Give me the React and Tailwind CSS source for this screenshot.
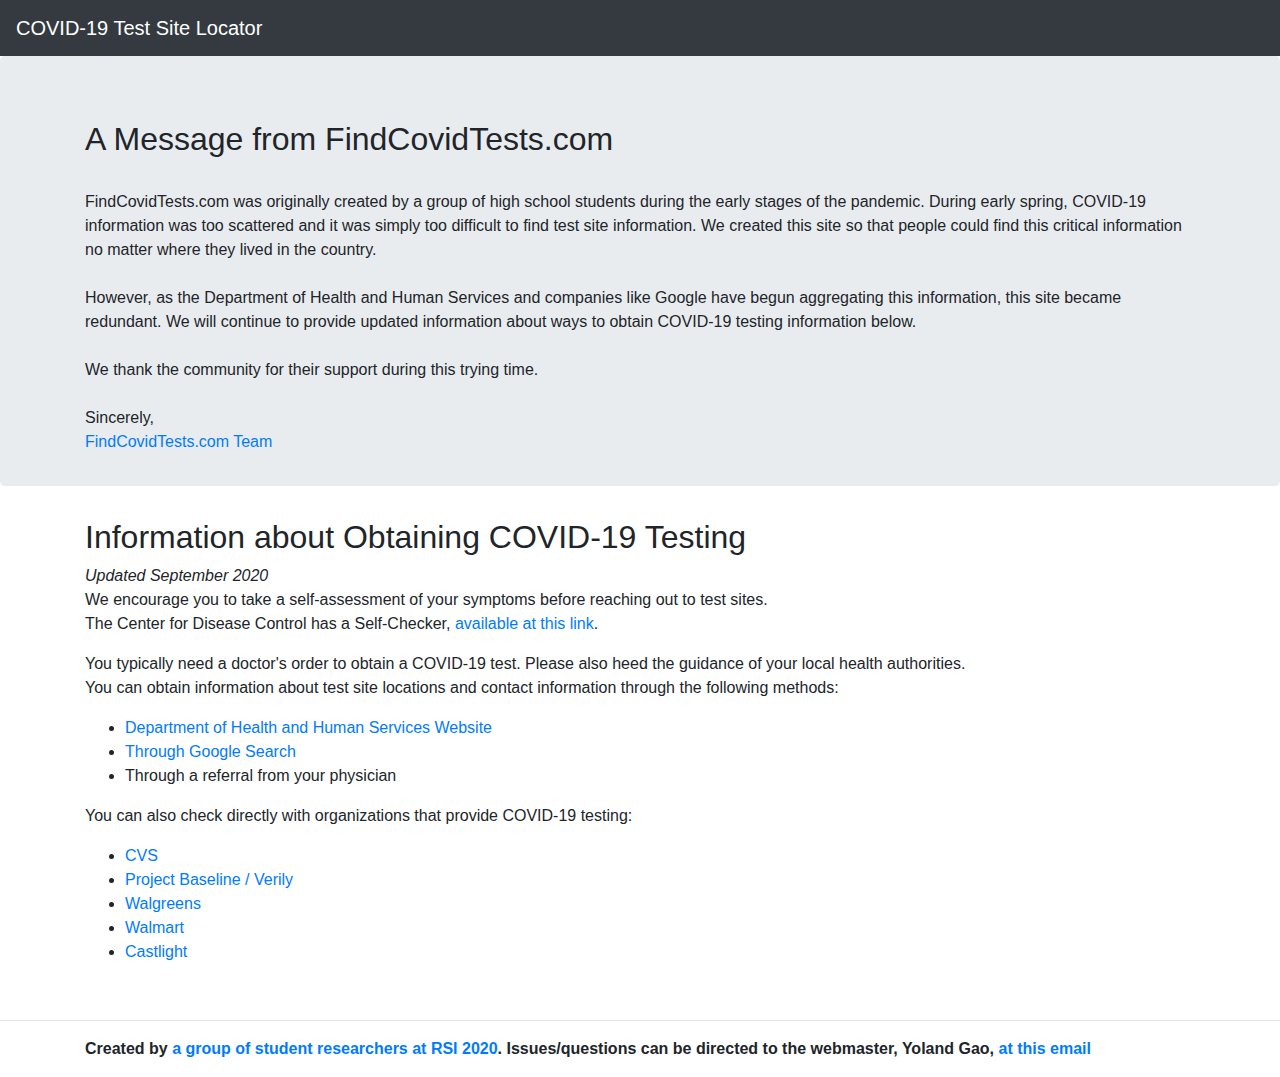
import React from 'react';

const linkClass = 'text-[#007bff] hover:underline';

const NavBar = () => (
  <nav className="h-14 bg-[#343a40] flex items-center px-4">
    <a href="#" className="text-white text-xl leading-[30px]">COVID-19 Test Site Locator</a>
  </nav>
);

const Message = () => (
  <div className="bg-[#e9ecef] rounded-[0.3rem] pt-16 pb-[32px] mb-8">
    <div className="max-w-[1140px] mx-auto px-[15px]">
      <h2 className="text-[32px] leading-[1.2] font-medium mb-[32px]">A Message from FindCovidTests.com</h2>
      <p className="leading-6">
        FindCovidTests.com was originally created by a group of high school students during the early stages of the pandemic. During early spring, COVID-19 information was too scattered and it was simply too difficult to find test site information. We created this site so that people could find this critical information no matter where they lived in the country.
        <br />
        <br />
        However, as the Department of Health and Human Services and companies like Google have begun aggregating this information, this site became redundant. We will continue to provide updated information about ways to obtain COVID-19 testing information below.
        <br />
        <br />
        We thank the community for their support during this trying time.
        <br />
        <br />
        Sincerely,
        <br />
        <a href="#" className={linkClass}>FindCovidTests.com Team</a>
      </p>
    </div>
  </div>
);

const methods = [
  { label: 'Department of Health and Human Services Website', link: true },
  { label: 'Through Google Search', link: true },
  { label: 'Through a referral from your physician', link: false },
];

const orgs = ['CVS', 'Project Baseline / Verily', 'Walgreens', 'Walmart', 'Castlight'];

const Info = () => (
  <div className="max-w-[1140px] mx-auto px-[15px]">
    <h2 className="text-[32px] leading-[1.2] font-medium mb-[7px]">Information about Obtaining COVID-19 Testing</h2>
    <p className="leading-6 mb-4">
      <i>Updated September 2020</i>
      <br />
      We encourage you to take a self-assessment of your symptoms before reaching out to test sites.
      <br />
      The Center for Disease Control has a Self-Checker, <a href="#" className={linkClass}>available at this link</a>.
    </p>
    <p className="leading-6 mb-4">
      You typically need a doctor's order to obtain a COVID-19 test. Please also heed the guidance of your local health authorities.
      <br />
      You can obtain information about test site locations and contact information through the following methods:
    </p>
    <ul className="list-disc pl-10 leading-6 mb-4">
      {methods.map((m) => (
        <li key={m.label}>
          {m.link ? <a href="#" className={linkClass}>{m.label}</a> : m.label}
        </li>
      ))}
    </ul>
    <p className="leading-6 mb-4">You can also check directly with organizations that provide COVID-19 testing:</p>
    <ul className="list-disc pl-10 leading-6 mb-4">
      {orgs.map((o) => (
        <li key={o}>
          <a href="#" className={linkClass}>{o}</a>
        </li>
      ))}
    </ul>
  </div>
);

const Footer = () => (
  <footer className="mt-14">
    <hr className="border-0 border-t border-[rgba(0,0,0,0.1)] mb-4" />
    <div className="max-w-[1140px] mx-auto px-[15px] pb-4">
      <p className="leading-6 font-bold">
        Created by <a href="#" className={linkClass}>a group of student researchers at RSI 2020</a>. Issues/questions can be directed to the webmaster, Yoland Gao, <a href="#" className={linkClass}>at this email</a>
      </p>
    </div>
  </footer>
);

export default function App() {
  return (
    <div className="min-h-screen bg-white text-[#212529] text-base font-['Liberation_Sans',Arial,sans-serif]">
      <NavBar />
      <Message />
      <Info />
      <Footer />
    </div>
  );
}
